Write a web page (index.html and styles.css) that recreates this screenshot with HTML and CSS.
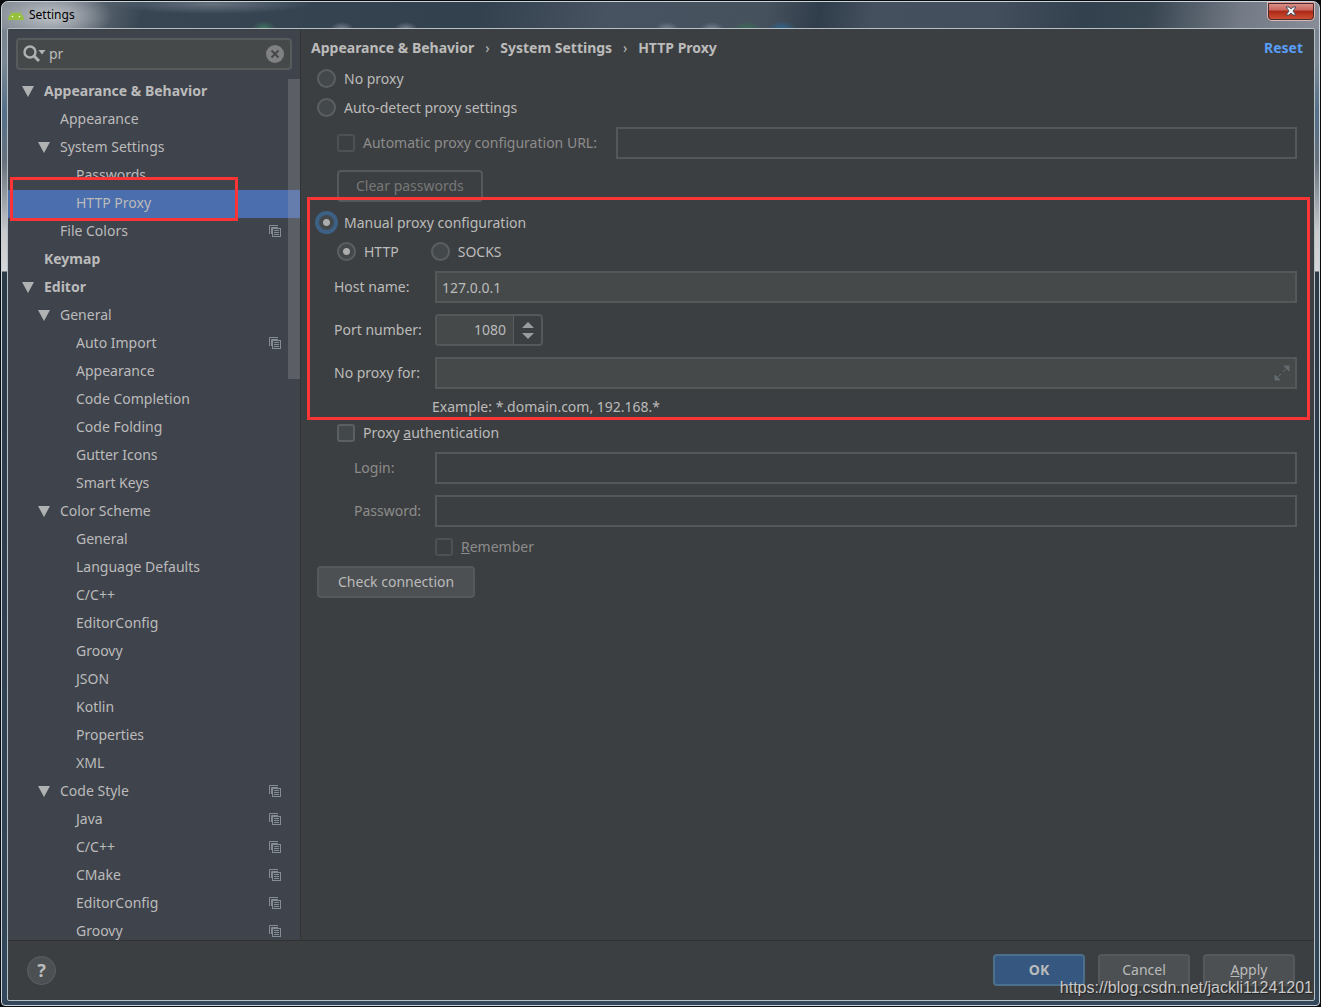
FILE: index.html
```html
<!DOCTYPE html>
<html lang="en">
<head>
<meta charset="utf-8">
<meta name="viewport" content="width=device-width, initial-scale=1">
<title>Settings</title>
<link rel="stylesheet" href="styles.css">
</head>
<body>
<svg class="defs" aria-hidden="true">
  <symbol id="copy" viewBox="0 0 12 12">
    <path d="M0.5 9V0.5H9M2.5 9V2.5H9" fill="none" stroke="#848c96"/>
    <rect x="3.5" y="3.5" width="8" height="8" fill="#3f434c" stroke="#848c96"/>
    <path d="M5 5.5h5M5 7.5h5M5 9.5h5" stroke="#848c96"/>
  </symbol>
  <symbol id="arrow" viewBox="0 0 12 12"><path d="M0 1h12L6 12z" fill="#afb1b3"/></symbol>
</svg>
<div class="window">
  <header class="titlebar">
    <svg class="droid" viewBox="0 0 16 9" aria-hidden="true">
      <path d="M0 9C0.300 5.500 1.800 3.500 4 2.300L2.500 0.400L3 0L4.800 1.900C6.800 1.200 9.200 1.200 11.200 1.900L13 0L13.500 0.400L12 2.300C14.200 3.500 15.700 5.500 16 9z" fill="#97c03d"/>
      <circle cx="4.500" cy="5.500" r="0.800" fill="#fff"/><circle cx="11.500" cy="5.500" r="0.800" fill="#fff"/>
    </svg>
    <h1 class="title">Settings</h1>
    <button class="close" type="button" aria-label="Close">
      <svg viewBox="0 0 12 10" aria-hidden="true"><path d="M1 1h3.200L6 3L7.800 1H11L8 5L11 9H7.800L6 7L4.200 9H1L4 5z" fill="#f4f4f4" stroke="#4a4f5c"/></svg>
    </button>
  </header>
  <div class="content">
    <div class="panes">
      <aside class="sidebar">
        <div class="search">
          <svg class="lens" viewBox="0 0 24 18" aria-hidden="true"><circle cx="7" cy="7" r="5.500" fill="none" stroke="#afb1b3" stroke-width="2.400"/><path d="M11 11l5 5" stroke="#afb1b3" stroke-width="3"/><path d="M15.500 5h7L19 9.500z" fill="#afb1b3"/></svg>
          <input class="search-text" type="text" value="pr" aria-label="Search settings">
          <button class="clear" type="button" aria-label="Clear search"><svg viewBox="0 0 18 18" aria-hidden="true"><circle cx="9" cy="9" r="9" fill="#7f8182"/><path d="M5.500 5.500l7 7M12.500 5.500l-7 7" stroke="#45494a" stroke-width="2"/></svg></button>
        </div>
        <nav class="tree-area" aria-label="Settings categories">
          <ul class="tree">
            <li><a class="node top" href="#"><svg class="arrow"><use href="#arrow"/></svg>Appearance &amp; Behavior</a></li>
            <li><a class="node two" href="#">Appearance</a></li>
            <li><a class="node two" href="#"><svg class="arrow"><use href="#arrow"/></svg>System Settings</a></li>
            <li><a class="node three" href="#">Passwords</a></li>
            <li><a class="node three selected" href="#" aria-current="page">HTTP Proxy</a></li>
            <li><a class="node two" href="#">File Colors<svg class="copy"><use href="#copy"/></svg></a></li>
            <li><a class="node top" href="#">Keymap</a></li>
            <li><a class="node top" href="#"><svg class="arrow"><use href="#arrow"/></svg>Editor</a></li>
            <li><a class="node two" href="#"><svg class="arrow"><use href="#arrow"/></svg>General</a></li>
            <li><a class="node three" href="#">Auto Import<svg class="copy"><use href="#copy"/></svg></a></li>
            <li><a class="node three" href="#">Appearance</a></li>
            <li><a class="node three" href="#">Code Completion</a></li>
            <li><a class="node three" href="#">Code Folding</a></li>
            <li><a class="node three" href="#">Gutter Icons</a></li>
            <li><a class="node three" href="#">Smart Keys</a></li>
            <li><a class="node two" href="#"><svg class="arrow"><use href="#arrow"/></svg>Color Scheme</a></li>
            <li><a class="node three" href="#">General</a></li>
            <li><a class="node three" href="#">Language Defaults</a></li>
            <li><a class="node three" href="#">C/C++</a></li>
            <li><a class="node three" href="#">EditorConfig</a></li>
            <li><a class="node three" href="#">Groovy</a></li>
            <li><a class="node three" href="#">JSON</a></li>
            <li><a class="node three" href="#">Kotlin</a></li>
            <li><a class="node three" href="#">Properties</a></li>
            <li><a class="node three" href="#">XML</a></li>
            <li><a class="node two" href="#"><svg class="arrow"><use href="#arrow"/></svg>Code Style<svg class="copy"><use href="#copy"/></svg></a></li>
            <li><a class="node three" href="#">Java<svg class="copy"><use href="#copy"/></svg></a></li>
            <li><a class="node three" href="#">C/C++<svg class="copy"><use href="#copy"/></svg></a></li>
            <li><a class="node three" href="#">CMake<svg class="copy"><use href="#copy"/></svg></a></li>
            <li><a class="node three" href="#">EditorConfig<svg class="copy"><use href="#copy"/></svg></a></li>
            <li><a class="node three" href="#">Groovy<svg class="copy"><use href="#copy"/></svg></a></li>
          </ul>
          <div class="thumb"></div>
        </nav>
      </aside>
      <main class="main">
        <div class="heading">
          <span>Appearance &amp; Behavior</span><span class="sep">›</span><span>System Settings</span><span class="sep">›</span><span>HTTP Proxy</span>
          <a class="reset" href="#">Reset</a>
        </div>
        <form class="form" id="proxy">
          <label class="option"><input class="radio" type="radio" name="mode">No proxy</label>
          <label class="option"><input class="radio" type="radio" name="mode">Auto-detect proxy settings</label>
          <div class="field nested">
            <label class="option"><input class="check" type="checkbox" disabled>Automatic proxy configuration URL:</label>
            <input class="text url" type="text" aria-label="Automatic proxy configuration URL" disabled>
          </div>
          <div class="field nested"><button class="button" type="button" disabled>Clear passwords</button></div>
          <section class="manual">
            <label class="option"><input class="radio focused" type="radio" name="mode" checked>Manual proxy configuration</label>
            <div class="kinds nested">
              <label class="option"><input class="radio" type="radio" name="kind" checked>HTTP</label>
              <label class="option"><input class="radio" type="radio" name="kind">SOCKS</label>
            </div>
            <div class="field"><label class="name" for="host">Host name:</label><input class="text" id="host" type="text" value="127.0.0.1"></div>
            <div class="field"><label class="name" for="port">Port number:</label>
              <div class="spinner"><input class="port" id="port" type="text" inputmode="numeric" value="1080">
                <div class="steps">
                  <button class="step" type="button" aria-label="Increase port"><svg viewBox="0 0 12 6" aria-hidden="true"><path d="M0 6L6 0l6 6z" fill="#9a9da0"/></svg></button>
                  <button class="step" type="button" aria-label="Decrease port"><svg viewBox="0 0 12 6" aria-hidden="true"><path d="M0 0h12L6 6z" fill="#9a9da0"/></svg></button>
                </div>
              </div>
            </div>
            <div class="field"><label class="name" for="except">No proxy for:</label>
              <div class="text expandable"><input class="bare" id="except" type="text">
                <button class="expand" type="button" aria-label="Expand"><svg viewBox="0 0 16 16" aria-hidden="true"><path d="M10 1h5v5zM1 10v5h5zM12.500 3.500L9 7M3.500 12.500L7 9" fill="#626b70" stroke="#626b70"/></svg></button>
              </div>
            </div>
            <p class="example">Example: *.domain.com, 192.168.*</p>
          </section>
          <label class="option nested"><input class="check" type="checkbox"><span>Proxy <u>a</u>uthentication</span></label>
          <div class="field"><label class="name inner" for="login">Login:</label><input class="text" id="login" type="text" disabled></div>
          <div class="field"><label class="name inner" for="password">Password:</label><input class="text" id="password" type="password" disabled></div>
          <label class="option remember"><input class="check" type="checkbox" disabled><span><u>R</u>emember</span></label>
          <button class="button test" type="button">Check connection</button>
        </form>
      </main>
    </div>
    <footer class="footer">
      <button class="help" type="button">?</button>
      <button class="button action primary" type="submit" form="proxy">OK</button>
      <button class="button action" type="button">Cancel</button>
      <button class="button action" type="button"><span><u>A</u>pply</span></button>
    </footer>
  </div>
  <div class="watermark">https://blog.csdn.net/jackli11241201</div>
</div>
</body>
</html>
```
FILE: styles.css
```css
* { box-sizing: border-box; }

body {
  margin: 0;
  padding: 1px;
  height: 100vh;
  background: #0a0c10;
  color: #bbbbbb;
  font: 14px/20px "Noto Sans", "Open Sans", sans-serif;
}

button, input { font: inherit; color: inherit; }
button { cursor: pointer; }
svg { display: block; }
.defs { position: absolute; width: 0; height: 0; }

/* Glass window frame */
.window {
  position: relative;
  display: flex;
  flex-direction: column;
  height: 100%;
  padding: 0 4px 4px 5px;
  border: 1px solid #c9d3dc;
  border-radius: 7px 7px 4px 4px;
  background:
    radial-gradient(ellipse 60px 26px at 50px 14px, #c0c4c9, transparent) no-repeat,
    radial-gradient(ellipse 12px 8px at 262px 27px, #3f7a62, transparent) no-repeat,
    radial-gradient(ellipse 14px 8px at 745px 27px, #3c6b55, transparent) no-repeat,
    radial-gradient(ellipse 14px 8px at 780px 27px, #2f6690, transparent) no-repeat,
    radial-gradient(ellipse 12px 7px at 710px 27px, #76818f, transparent) no-repeat,
    radial-gradient(ellipse 12px 7px at 665px 27px, #76818f, transparent) no-repeat,
    radial-gradient(ellipse 12px 7px at 404px 27px, #76818f, transparent) no-repeat,
    radial-gradient(ellipse 12px 7px at 340px 27px, #76818f, transparent) no-repeat,
    radial-gradient(ellipse 100px 10px at 210px 2px, #66717e, transparent) no-repeat,
    linear-gradient(100deg, #858c96 0, #6b747f 70px, transparent 140px) 0 0 / 100% 27px no-repeat,
    linear-gradient(100deg, #3a4855 0, #33404d 36%, #475360 46%, #45515d 58%, #303d4a 62%, #44505e 66%, #434f5c 75%, #33404d 82%, #384652 87%, #747b86 94%, #888d98 100%) 0 0 / 100% 27px no-repeat,
    linear-gradient(#77818d 0, #7b8792 60px, #55708a 110px, #68717b 160px, #c8cacc 230px, #d5d7d9 269px, #2c3947 270px, #34475a 100%);
}

.titlebar {
  display: flex;
  flex: none;
  align-items: center;
  height: 26px;
  padding-left: 1px;
}
.droid { width: 16px; height: 9px; }
.title {
  flex: 1;
  margin: 0 0 0 5px;
  color: #000;
  font: 12px/20px "Noto Sans", sans-serif;
}
.close {
  display: grid;
  place-items: center;
  align-self: flex-start;
  width: 48px;
  height: 19px;
  padding: 0;
  border: 1px solid #d9b7b5;
  border-top: 0;
  border-radius: 0 0 5px 5px;
  outline: 1px solid #4a2c2f;
  outline-offset: -2px;
  background: linear-gradient(#dc9c94, #c9665c 45%, #ad2716 50%, #cf5437);
}
.close svg { width: 12px; height: 10px; }

.content {
  display: flex;
  flex: 1;
  flex-direction: column;
  min-height: 0;
  padding-top: 1px;
  border: 1px solid #b5bfc6;
  border-radius: 2px;
  background: #3c3f41;
}
.panes { display: flex; flex: 1; min-height: 0; }

/* Category tree */
.sidebar {
  display: flex;
  flex: none;
  flex-direction: column;
  width: 293px;
  border-right: 1px solid #323435;
  background: #3f434c;
}
.search {
  display: flex;
  flex: none;
  align-items: center;
  height: 32px;
  margin: 8px;
  padding: 0 6px 0 5px;
  border: 2px solid #585b5d;
  border-radius: 4px;
  background: #45494a;
}
.lens { width: 24px; height: 18px; }
.search-text {
  flex: 1;
  min-width: 0;
  padding: 0 2px;
  border: 0;
  outline: 0;
  background: none;
}
.clear { width: 18px; height: 18px; padding: 0; border: 0; background: none; }
.tree-area { position: relative; flex: 1; min-height: 0; }
.tree { height: 100%; margin: 0; padding: 0; overflow: hidden; list-style: none; }
.node {
  display: flex;
  align-items: center;
  height: 28px;
  padding: 0 19px 2px 36px;
  color: inherit;
  text-decoration: none;
}
.top { font-weight: 700; }
.two { padding-left: 52px; }
.three { padding-left: 68px; }
.arrow { width: 12px; height: 12px; margin: 0 10px 0 -22px; }
.copy { width: 12px; height: 12px; margin-left: auto; }
.selected { position: relative; background: #4b6eaf; }
.selected::after {
  position: absolute;
  z-index: 1;
  inset: -13px 62px -3px 2px;
  border: 3px solid #fb3535;
  content: "";
}
.thumb {
  position: absolute;
  top: 1px;
  right: 0;
  width: 12px;
  height: 300px;
  background: rgba(166, 166, 166, 0.280);
}

/* Proxy page */
.main { flex: 1; min-width: 0; }
.heading {
  display: flex;
  align-items: center;
  height: 34px;
  padding: 2px 11px 0 10px;
  font-weight: 700;
}
.sep { width: 26px; font-weight: 400; text-align: center; }
.reset { margin-left: auto; color: #589df6; text-decoration: none; }
.form { padding: 0 17px 0 16px; }
.option { display: flex; align-items: center; gap: 8px; height: 29px; }
.option:has(:disabled) { color: #8c8c8c; }
.nested { padding-left: 20px; }
.radio, .check {
  flex: none;
  margin: 0;
  border: 2px solid #5b5f61;
  background: #43494a;
  appearance: none;
}
.radio { width: 19px; height: 19px; border-radius: 50%; }
.radio:checked { background: radial-gradient(circle, #adadad 3px, #43494a 4px); }
.focused { border-color: #3d6185; outline: 3px solid #3d6185; outline-offset: -1px; }
.check { width: 18px; height: 18px; border-radius: 3px; }
.check:disabled { border-color: #4d5153; background: none; }

.field { display: flex; align-items: center; height: 32px; margin-top: 5px; }
.field + .field { margin-top: 11px; }
.name { flex: none; width: 118px; padding-left: 17px; }
.inner { padding-left: 37px; color: #8c8c8c; }
.text {
  flex: 1;
  min-width: 0;
  height: 32px;
  padding: 0 5px;
  border: 2px solid #555859;
  outline: 0;
  background: #45494a;
}
.text:disabled { background: none; }
.url { margin-left: 19px; }
.kinds { display: flex; gap: 32px; }
.manual { position: relative; margin-top: 6px; }
.manual::after {
  position: absolute;
  inset: -11px -13px -2px -10px;
  border: 3px solid #fb3535;
  pointer-events: none;
  content: "";
}
.spinner {
  display: flex;
  width: 108px;
  height: 32px;
  border: 2px solid #555859;
  border-radius: 4px;
}
.port {
  flex: 1;
  min-width: 0;
  padding: 0 7px;
  border: 0;
  border-right: 1px solid #5a5d5e;
  outline: 0;
  background: #45494a;
  text-align: right;
}
.steps { display: flex; flex-direction: column; justify-content: center; gap: 5px; width: 27px; }
.step { display: grid; place-items: center; height: 6px; padding: 0; border: 0; background: none; }
.step svg { width: 12px; height: 6px; }
.expandable { display: flex; align-items: center; }
.bare { flex: 1; min-width: 0; padding: 0; border: 0; outline: 0; background: none; }
.expand { width: 16px; height: 16px; padding: 0; border: 0; background: none; }
.example { height: 29px; margin: 0; padding: 8px 0 0 115px; }
.remember { margin-top: 5px; padding-left: 118px; }

.button {
  height: 32px;
  padding: 0 17px;
  border: 2px solid #56595b;
  border-radius: 4px;
  background: #4c5052;
}
.button:disabled { background: none; color: #777777; }
.test { margin-top: 5px; padding: 0 19px; }

.footer {
  display: flex;
  flex: none;
  align-items: center;
  gap: 13px;
  height: 60px;
  padding: 0 19px 1px 19px;
  border-top: 1px solid #323232;
}
.help {
  width: 29px;
  height: 29px;
  margin-right: auto;
  padding: 0;
  border: 1px solid #5e6163;
  border-radius: 50%;
  background: #4c5052;
  font-size: 18px;
  font-weight: 700;
}
.action { width: 92px; padding: 0; }
.primary { border-color: #4c708c; background: #365880; font-weight: 700; }

.watermark {
  position: absolute;
  right: 6px;
  bottom: 7px;
  color: #c8c9ca;
  font: 16px/20px "Liberation Sans", sans-serif;
  text-shadow: 1px 1px 1px #222;
}
```
